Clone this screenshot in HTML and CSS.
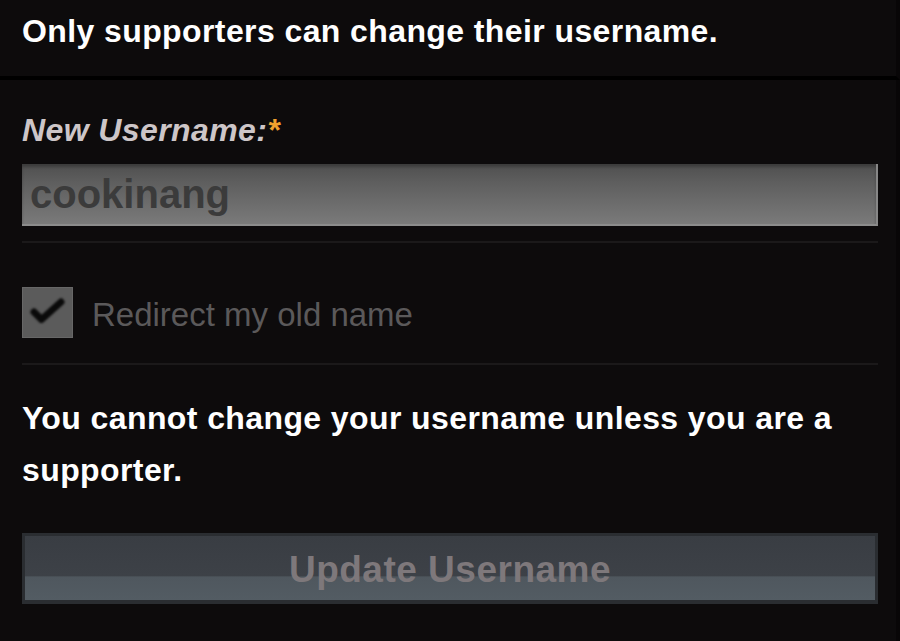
FILE: index.html
```html
<!DOCTYPE html>
<html lang="en">
<head>
    <meta charset="UTF-8">
    <meta name="viewport" content="width=device-width, initial-scale=1.0">
    <title>Change Username</title>
    <link rel="stylesheet" href="styles.css">
</head>
<body>

    <!-- Notice -->
    <div class="notice">
        <h2>Only supporters can change their username.</h2>
    </div>

    <div class="panel">
        <form id="username-form">
            <!-- New Username -->
            <label for="new-username" class="field-label">New Username:<span class="required">*</span></label>
            <input type="text" id="new-username" name="new_username" value="cookinang" disabled>

            <div class="divider"></div>

            <!-- Redirect -->
            <label class="check-row">
                <span class="check-box">
                    <svg width="51" height="51" viewBox="0 0 51 51">
                        <path d="M12 25 L19.5 32.5 L39 15" fill="none" stroke="#0a0a0a" stroke-width="7" stroke-linecap="round" stroke-linejoin="round"/>
                    </svg>
                </span>
                <span class="check-text">Redirect my old name</span>
            </label>

            <div class="divider"></div>

            <p class="warning">You cannot change your username unless you are a supporter.</p>

            <button type="submit" disabled>Update Username</button>
        </form>
    </div>

</body>
</html>
```

FILE: styles.css
```css
body {
    margin: 0;
    background-color: #0c0a0b;
    font-family: "Liberation Sans", Arial, sans-serif;
    color: #fff;
}

.notice {
    height: 76px;
    padding: 0 18px 0 22px;
    display: flex;
    align-items: center;
    background-color: #0d0b0c;
    border-bottom: 4px solid #000;
    border-right: 4px solid #080607;
}

.notice h2 {
    margin: 0;
    margin-top: -14px;
    font-size: 32px;
    letter-spacing: 0.4px;
    font-weight: bold;
}

.panel {
    padding: 0 18px 40px 22px;
    background-color: #0d0b0c;
    border-right: 4px solid #080607;
}

.field-label {
    display: block;
    padding-top: 32px;
    font-size: 32px;
    line-height: 36px;
    letter-spacing: 0.4px;
    font-weight: bold;
    font-style: italic;
    color: #cdc6c8;
}

.required {
    color: #f0a12e;
}

input[type="text"] {
    display: block;
    width: 100%;
    height: 62px;
    margin-top: 16px;
    padding: 0 8px;
    box-sizing: border-box;
    border: none;
    border-right: 2px solid #878787;
    border-bottom: 2px solid #8c8c8c;
    background: linear-gradient(to bottom, #4f4f4f 0, #5e5e5e 30%, #7a7a7a 100%);
    box-shadow: inset 0 3px 3px rgba(0, 0, 0, 0.25);
    font-family: "Liberation Sans", Arial, sans-serif;
    font-size: 40px;
    font-weight: bold;
    color: #3b3b3b;
    -webkit-text-fill-color: #3b3b3b;
    opacity: 1;
}

.divider {
    height: 2px;
    margin-top: 15px;
    background-color: #1b191a;
}

.check-row {
    display: flex;
    align-items: center;
    margin-top: 44px;
    margin-bottom: 25px;
}

.check-box {
    width: 51px;
    height: 51px;
    box-sizing: border-box;
    border: 1px solid #676767;
    background-color: #5b5b5b;
    display: flex;
}

.check-box svg {
    margin: -1px;
    filter: blur(0.8px);
}

.check-text {
    margin-left: 19px;
    margin-top: 4px;
    font-size: 33px;
    color: #5b595a;
}

.warning {
    margin: 27px 0 0;
    font-size: 32px;
    line-height: 52px;
    letter-spacing: 0.4px;
    font-weight: bold;
}

button {
    display: flex;
    align-items: center;
    justify-content: center;
    width: 100%;
    height: 71px;
    margin-top: 37px;
    padding: 4px 0 0;
    box-sizing: border-box;
    border: 3px solid #2a2d31;
    border-bottom-width: 4px;
    background: linear-gradient(to bottom, #393d43 0, #3d4147 62%, #4f575e 64%, #535c63 100%);
    font-family: "Liberation Sans", Arial, sans-serif;
    font-size: 37px;
    letter-spacing: 0.5px;
    font-weight: bold;
    color: #7e787b;
}
```
